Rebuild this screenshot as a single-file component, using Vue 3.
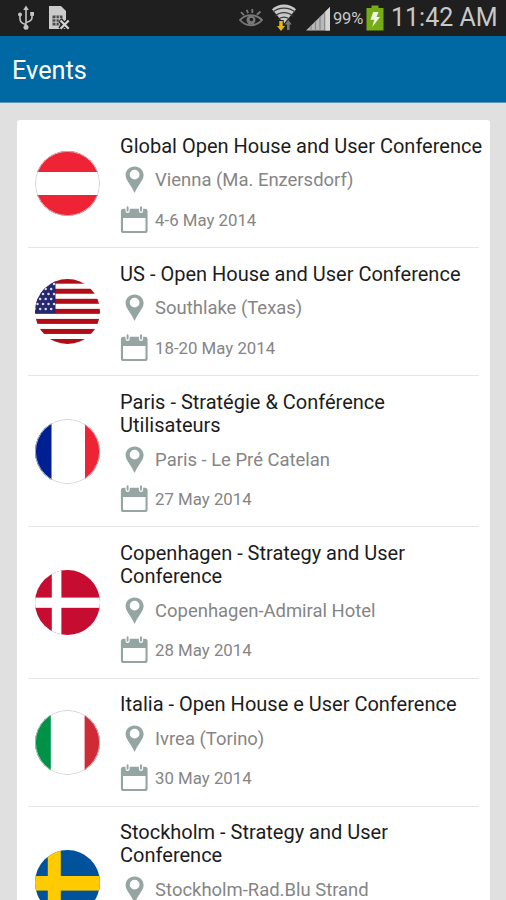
<script setup>
const events = [
  { flag: 'at', title: ['Global Open House and User Conference'], place: 'Vienna (Ma. Enzersdorf)', date: '4-6 May 2014' },
  { flag: 'us', title: ['US - Open House and User Conference'], place: 'Southlake (Texas)', date: '18-20 May 2014' },
  { flag: 'fr', title: ['Paris - Stratégie & Conférence', 'Utilisateurs'], place: 'Paris - Le Pré Catelan', date: '27 May 2014' },
  { flag: 'dk', title: ['Copenhagen - Strategy and User', 'Conference'], place: 'Copenhagen-Admiral Hotel', date: '28 May 2014' },
  { flag: 'it', title: ['Italia - Open House e User Conference'], place: 'Ivrea (Torino)', date: '30 May 2014' },
  { flag: 'se', title: ['Stockholm - Strategy and User', 'Conference'], place: 'Stockholm-Rad.Blu Strand' },
]

// Each flag is a background plus rectangles: [x, y, width, height, colour]
const flags = {
  at: { bg: '#ffffff', ring: true, rects: [[0, 0, 65, 21, '#ee2436'], [0, 44, 65, 21, '#ee2436']] },
  us: {
    bg: '#ffffff',
    rects: [
      ...[0, 1, 2, 3, 4, 5, 6].map((i) => [0, i * 10.05 - 0.3, 65, 5, '#b20d17']),
      [0, 0, 20.5, 34.3, '#25286f'],
    ],
    stars: [4, 9, 14, 19, 24, 29].flatMap((y, r) => [2.5, 8, 13.5, 19].map((x) => [x - (r % 2) * 2.8, y + 1])),
  },
  fr: { bg: '#ffffff', ring: true, rects: [[0, 0, 16.5, 65, '#001f92'], [50, 0, 15, 65, '#ee2436']] },
  dk: { bg: '#c60c30', rects: [[16.8, 0, 9.6, 65, '#ffffff'], [0, 27.6, 65, 10.2, '#ffffff']] },
  it: { bg: '#ffffff', ring: true, rects: [[0, 0, 15.8, 65, '#009246'], [49.6, 0, 15.4, 65, '#ce2b37']] },
  se: { bg: '#00529b', rects: [[12.8, 0, 13, 65, '#fecb00'], [0, 26, 65, 14.6, '#fecb00']] },
}
</script>

<template>
  <div class="screen">
    <div class="status">
      <svg class="usb" width="18" height="26" viewBox="0 0 18 26" fill="none" stroke="#c4c4c4" stroke-width="1.6">
        <path d="M9 4V23M9 19.5C4.5 18.5 3 17 3 14V10M9 17.5C13.5 16.5 15 15 15 12.5V9" />
        <path d="M9 0.5L11.8 5H6.2Z" fill="#c4c4c4" stroke="none" />
        <circle cx="9" cy="22.2" r="2.5" fill="#c4c4c4" stroke="none" />
        <circle cx="3" cy="9.5" r="2" fill="#c4c4c4" stroke="none" />
        <rect x="13.2" y="7" width="3.8" height="3.8" fill="#c4c4c4" stroke="none" />
      </svg>
      <svg class="sim" width="23" height="26" viewBox="0 0 23 26">
        <path d="M1 1H13L18 6V24H1Z" fill="#cbcbcb" />
        <path d="M4.5 10.5H14.5V20.5H4.5Z" fill="#4a4a4a" />
        <path d="M4.5 13.8H14.5M4.5 17.2H14.5M8 10.5V20.5M11.3 10.5V20.5" stroke="#cbcbcb" stroke-width="1" />
        <path d="M12 15L21 24M21 15L12 24" stroke="#1f1f1f" stroke-width="4.6" />
        <path d="M12.5 15.5L20.7 23.7M20.7 15.5L12.5 23.7" stroke="#d4d4d4" stroke-width="2.3" />
      </svg>
      <div class="spacer"></div>
      <svg class="eye" width="24" height="20" viewBox="0 0 24 20" fill="none" stroke="#777777" stroke-width="1.9">
        <path d="M1 12C7 5.5 17 5.5 23 12C17 19 7 19 1 12Z" />
        <circle cx="12" cy="12" r="4.5" fill="#777777" stroke="none" />
        <circle cx="12.4" cy="11.5" r="1.8" fill="#1f1f1f" stroke="none" />
        <path d="M2 4.2L5 7.2M7.7 1.8L9 5.2M13.3 1V5M21.5 3.5L17.8 6.8" />
      </svg>
      <svg class="wifi" width="26" height="28" viewBox="0 0 26 28" fill="none">
        <path d="M13 0.5C8.5 0.5 4.2 2.2 1 5.2L13 19.5L25 5.2C21.8 2.2 17.5 0.5 13 0.5Z" fill="#c9c9c9" />
        <path d="M1.5 8.4C8 2.8 18 2.8 24.5 8.4M4 12.2C9.2 7.4 16.8 7.4 22 12.2M7 15.6C10.6 12.2 15.4 12.2 19 15.6" stroke="#3a3a3a" stroke-width="1.2" />
        <path d="M7.3 16H12.7V21H15L10 28L5 21H7.3Z" fill="#1f1f1f" />
        <path d="M8.3 17H11.7V22H14L10 27L6 22H8.3Z" fill="#e5b80f" />
        <path d="M16 26V20.5H13.8L17.3 16L20.8 20.5H18.6V26Z" fill="#777777" />
      </svg>
      <svg class="signal" width="25" height="24" viewBox="0 0 25 24">
        <path d="M0 23.5L24 0V23.5Z" fill="#b8b8b8" />
        <path d="M5 18.6V23.5M9.5 14.2V23.5M14 9.8V23.5M18.7 5.2V23.5" stroke="#888888" stroke-width="1.2" />
        <path d="M19.5 4.4L24 0V23.5H19.5Z" fill="#d6d6d6" />
      </svg>
      <span class="percent">99%</span>
      <svg class="battery" width="18" height="26" viewBox="0 0 18 26">
        <path d="M5.5 0.5H12.5V3H17.5V25.5H0.5V3H5.5Z" fill="#76ad16" />
        <path d="M7.2 7H12.5L10.5 12H14L6.2 22L8.3 14.8H4.5Z" fill="#f1f6e6" />
      </svg>
      <span class="clock">11:42 AM</span>
    </div>

    <header class="bar"><h1>Events</h1></header>

    <main class="body">
      <div class="card">
        <article v-for="e in events" :key="e.title[0]" class="event">
          <svg class="flag" viewBox="0 0 65 65">
            <rect width="65" height="65" :fill="flags[e.flag].bg" />
            <rect v-for="(r, i) in flags[e.flag].rects" :key="i" :x="r[0]" :y="r[1]" :width="r[2]" :height="r[3]" :fill="r[4]" />
            <circle v-for="(s, i) in flags[e.flag].stars" :key="'s' + i" :cx="s[0]" :cy="s[1]" r="1.25" fill="#d9daea" />
            <circle v-if="flags[e.flag].ring" cx="32.5" cy="32.5" r="32.1" fill="none" stroke="#c9cccc" stroke-width="0.9" />
          </svg>
          <div class="info">
            <h2><span v-for="line in e.title" :key="line">{{ line }}</span></h2>
            <div class="row place">
              <svg width="28" height="28" viewBox="0 0 28 28">
                <path fill-rule="evenodd" d="M14.6 0.4C9.5 0.4 5.6 4.2 5.6 9.1C5.6 14.5 10.8 18.5 14.6 27C18.4 18.5 23.6 14.5 23.6 9.1C23.6 4.2 19.7 0.4 14.6 0.4ZM14.6 3.7A4.9 4.9 0 1 1 14.6 13.5A4.9 4.9 0 1 1 14.6 3.7Z" fill="#94a5a2" />
              </svg>
              <span>{{ e.place }}</span>
            </div>
            <div class="row date">
              <svg v-if="e.date" width="28" height="28" viewBox="0 0 28 28">
                <path fill-rule="evenodd" d="M3.5 2.8H25Q27.6 2.8 27.6 5.4V24.5Q27.6 27.1 25 27.1H3.5Q0.9 27.1 0.9 24.5V5.4Q0.9 2.8 3.5 2.8ZM3 11.9V24Q3 25 4 25H24.5Q25.5 25 25.5 24V11.9Z" fill="#94a5a2" />
                <path d="M7.6 1V5M21 1V5" stroke="#ffffff" stroke-width="4.2" stroke-linecap="round" />
                <path d="M7.6 1.2V4.8M21 1.2V4.8" stroke="#94a5a2" stroke-width="1.9" stroke-linecap="round" />
              </svg>
              <span>{{ e.date }}</span>
            </div>
          </div>
        </article>
      </div>
    </main>
  </div>
</template>

<style>
body {
  margin: 0;
  background: #e0e0e0;
}
</style>

<style scoped>
.screen {
  width: 506px;
  height: 900px;
  overflow: hidden;
  display: flex;
  flex-direction: column;
  background: #e0e0e0;
  font-family: Roboto, "Liberation Sans", sans-serif;
}
.status {
  flex: none;
  box-sizing: border-box;
  height: 36px;
  padding: 0 9px 0 17px;
  display: flex;
  align-items: center;
  background: #1f1f1f;
  color: #c8c8c8;
}
.status svg {
  flex: none;
}
.usb {
  margin-top: -1px;
}
.sim {
  margin: -1px 0 0 13px;
}
.spacer {
  flex: 1;
}
.wifi {
  margin: -1px 0 0 8px;
}
.signal {
  margin: 1px 0 0 9px;
}
.percent {
  width: 31px;
  margin: 0 0 0 2px;
  font-size: 16.5px;
  letter-spacing: -0.2px;
}
.battery {
  margin-left: 2px;
}
.clock {
  width: 106px;
  margin-left: 7px;
  font-size: 25px;
  line-height: 34px;
  white-space: nowrap;
}
.bar {
  flex: none;
  box-sizing: border-box;
  height: 67px;
  padding-left: 12px;
  display: flex;
  align-items: center;
  background: #0069a4;
  border-bottom: 1px solid #5a96b8;
  color: #ffffff;
}
h1 {
  margin: 3px 0 0;
  font-size: 25.3px;
  font-weight: 400;
}
.body {
  flex: none;
  padding: 17px 16px 0 17px;
}
.card {
  background: #ffffff;
  border-radius: 3px;
}
.event {
  box-sizing: border-box;
  margin: 0 11px;
  padding: 14.6px 0 7.1px 6.5px;
  display: flex;
  align-items: center;
  border-bottom: 1px solid #e6e6e6;
}
.flag {
  flex: none;
  width: 65px;
  height: 65px;
  margin-top: -6.6px;
  border-radius: 50%;
}
.info {
  margin-left: 20.6px;
}
h2 {
  margin: 0 0 3px;
  font-size: 20px;
  line-height: 23.3px;
  font-weight: 400;
  color: #1c1c1c;
}
h2 span {
  display: block;
  white-space: nowrap;
}
.row {
  display: flex;
  align-items: center;
  gap: 7px;
  white-space: nowrap;
  color: #858585;
}
.place {
  height: 39px;
  font-size: 18.45px;
}
.date {
  height: 40px;
  font-size: 16.8px;
}
</style>
